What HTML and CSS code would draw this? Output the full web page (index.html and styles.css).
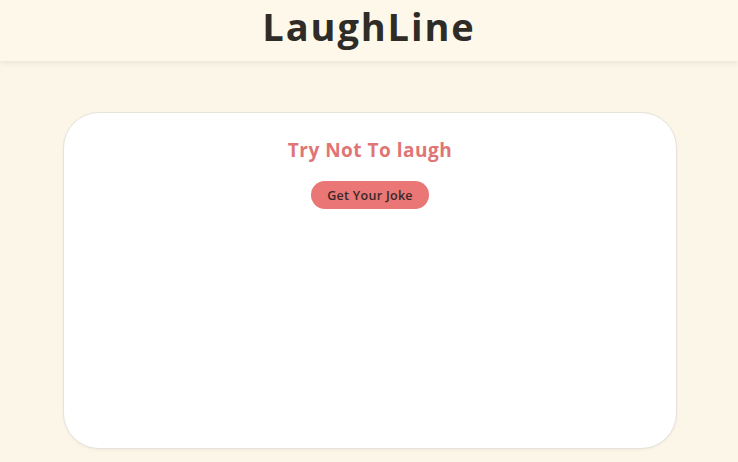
FILE: index.html
```html
<!DOCTYPE html>
<html>
<head>
<meta charset="utf-8">
<link rel="stylesheet" href="styles.css">
</head>
<body>
<header class="site-header">
  <h1 class="logo">LaughLine</h1>
</header>
<main class="main">
  <section class="card">
    <h2 class="card-title">Try Not To laugh</h2>
    <button class="joke-btn">Get Your Joke</button>
  </section>
</main>
</body>
</html>
```
FILE: styles.css
```css
* { box-sizing: border-box; }
html, body { margin: 0; padding: 0; }
body {
  background: #fcf6e8;
  font-family: "Open Sans", "DejaVu Sans", sans-serif;
  width: 738px;
  height: 462px;
  overflow: hidden;
}
.site-header {
  height: 61px;
  background: #fdf8ea;
  box-shadow: 0 2px 6px rgba(0,0,0,0.08);
  display: flex;
  justify-content: center;
  align-items: center;
}
.logo {
  margin: 0;
  font-size: 38px;
  font-weight: 700;
  color: #2f2c28;
  letter-spacing: 1.9px;
  position: relative;
  top: -5px;
}
.main {
  padding: 51px 61px 0 63px;
}
.card {
  height: 337px;
  background: #fff;
  border: 1px solid #e6e3dc;
  border-radius: 36px;
  box-shadow: 0 1px 3px rgba(0,0,0,0.05);
  display: flex;
  flex-direction: column;
  align-items: center;
  padding-top: 23px;
}
.card-title {
  margin: 0;
  font-size: 19px;
  font-weight: 700;
  color: #e07575;
  line-height: 28px;
  letter-spacing: 0.5px;
}
.joke-btn {
  margin-top: 17px;
  height: 28px;
  padding: 0 16px;
  border: none;
  border-radius: 14px;
  background: #ea7676;
  color: #3a2826;
  font-family: "Open Sans", sans-serif;
  font-size: 12.5px;
  font-weight: 600;
  letter-spacing: 0.3px;
}
```
